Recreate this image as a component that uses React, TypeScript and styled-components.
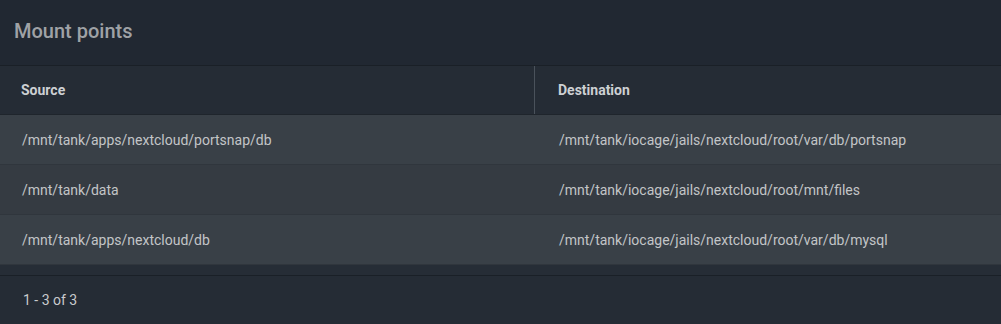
import styled, { createGlobalStyle } from 'styled-components';

const GlobalStyle = createGlobalStyle`
  html, body {
    margin: 0;
    padding: 0;
    background: #212832;
  }
  body {
    font-family: Roboto, "Liberation Sans", sans-serif;
  }
`;

const mounts = [
  { source: '/mnt/tank/apps/nextcloud/portsnap/db', destination: '/mnt/tank/iocage/jails/nextcloud/root/var/db/portsnap' },
  { source: '/mnt/tank/data', destination: '/mnt/tank/iocage/jails/nextcloud/root/mnt/files' },
  { source: '/mnt/tank/apps/nextcloud/db', destination: '/mnt/tank/iocage/jails/nextcloud/root/var/db/mysql' },
];

export default function App() {
  return (
    <>
      <GlobalStyle />
      <Card>
        <CardHeader>
          <Title>Mount points</Title>
        </CardHeader>
        <Table>
          <HeadRow>
            <HeadCell>Source</HeadCell>
            <HeadCell divided>Destination</HeadCell>
          </HeadRow>
          {mounts.map((m, i) => (
            <BodyRow key={m.source} odd={i % 2 === 1}>
              <Cell>{m.source}</Cell>
              <Cell second>{m.destination}</Cell>
            </BodyRow>
          ))}
          <TableBottom />
        </Table>
        <Footer>1 - 3 of 3</Footer>
      </Card>
    </>
  );
}

const Card = styled.div`
  width: 1001px;
  height: 324px;
  display: flex;
  flex-direction: column;
  background: #212832;
  overflow: hidden;
`;

const CardHeader = styled.div`
  height: 66px;
  flex-shrink: 0;
  display: flex;
  align-items: center;
  padding: 0 14px;
  box-sizing: border-box;
  border-bottom: 1px solid #1a2027;
`;

const Title = styled.h2`
  margin: -3px 0 0;
  font-size: 20px;
  font-weight: 500;
  color: #9fa2a6;
`;

const Table = styled.div`
  display: flex;
  flex-direction: column;
  background: #252c35;
`;

const HeadRow = styled.div`
  display: grid;
  grid-template-columns: 534px 1fr;
  height: 49px;
  border-bottom: 1px solid #1f252c;
  box-sizing: border-box;
`;

const HeadCell = styled.div<{ divided?: boolean }>`
  display: flex;
  align-items: center;
  padding-left: ${p => (p.divided ? '23px' : '21px')};
  font-size: 14px;
  font-weight: 700;
  color: #cdd0d3;
  border-left: ${p => (p.divided ? '1px solid #4a525b' : 'none')};
`;

const BodyRow = styled.div<{ odd?: boolean }>`
  display: grid;
  grid-template-columns: 535px 1fr;
  height: 50px;
  background: ${p => (p.odd ? '#353b42' : '#394047')};
  border-bottom: 1px solid #30363d;
  box-sizing: border-box;
`;

const Cell = styled.div<{ second?: boolean }>`
  display: flex;
  align-items: center;
  padding-left: ${p => (p.second ? '24px' : '22px')};
  font-size: 14px;
  color: #c3c5c7;
  white-space: nowrap;
`;

const TableBottom = styled.div`
  height: 10px;
  background: #262d36;
  border-bottom: 1px solid #1a2027;
`;

const Footer = styled.div`
  flex: 1;
  display: flex;
  align-items: center;
  padding-left: 23px;
  font-size: 14px;
  color: #c9cbcd;
  background: #252c35;
`;
